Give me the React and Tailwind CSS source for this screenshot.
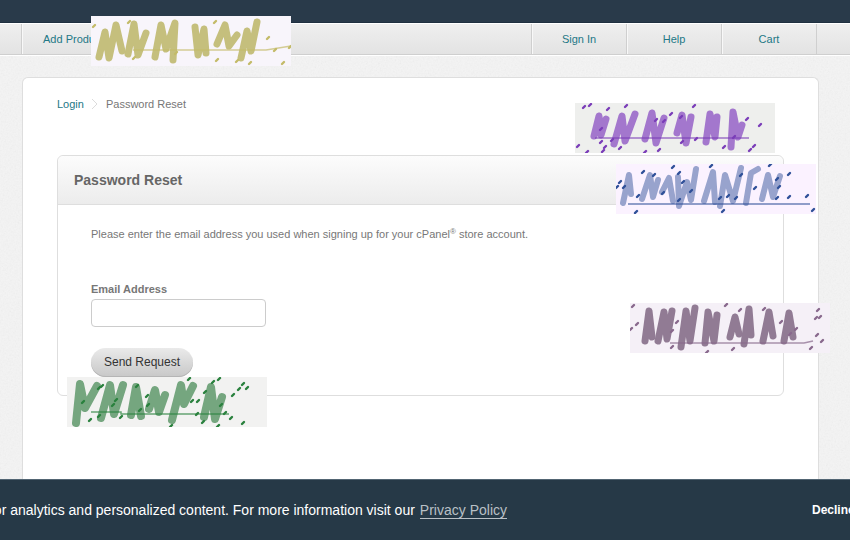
import React from 'react';

/* Noisy picture tile: loose brush marks, a strike line and short specks. */
function NoiseTile({ place, bg, ink, dark, marks, weight, line, specks }) {
  return (
    <svg
      className={`absolute h-[50px] w-[200px] ${place}`}
      viewBox="0 0 200 50"
      role="img"
      aria-label="Distorted picture"
    >
      <rect width="200" height="50" fill={bg} />
      <g fill="none" stroke={ink} strokeWidth={weight} strokeLinecap="round" strokeLinejoin="round">
        {marks.map((d) => (
          <path key={d} d={d} />
        ))}
      </g>
      <path d={line} stroke={dark} strokeWidth="1.5" strokeOpacity="0.7" fill="none" />
      <g stroke={dark} strokeWidth="2.4" strokeLinecap="round">
        {specks.map(([x, y]) => (
          <line key={`${x}-${y}`} x1={x - 1} y1={y + 1} x2={x + 1} y2={y - 1} />
        ))}
      </g>
    </svg>
  );
}

const tiles = [
  {
    place: 'left-[91px] top-[16px]',
    bg: '#f8f5fb', ink: '#c5bf7d', dark: '#c3bb68', weight: 7,
    marks: [
      'M8 41 L14 16 L18 42 L25 9 L31 35',
      'M37 38 L43 8 L47 39 L55 17',
      'M64 41 L70 9 L75 33 L84 7 L82 44',
      'M104 11 L107 39 L113 13 L115 37',
      'M126 28 L134 9 L138 30 L146 19',
      'M150 42 L156 15 L160 35 L166 6',
    ],
    line: 'M42 34 H175 L200 30',
    specks: [[3, 10], [38, 6], [43, 42], [85, 37], [124, 6], [126, 44], [146, 45], [159, 47], [177, 22], [184, 34], [192, 47], [199, 31]],
  },
  {
    place: 'left-[575px] top-[103px]',
    bg: '#eeefed', ink: '#a377cd', dark: '#7a3db8', weight: 7,
    marks: [
      'M19 33 L24 13 L26 32 L31 16',
      'M39 41 L47 13 L50 38 L60 11',
      'M70 36 L77 10 L81 40 L89 15',
      'M102 30 L107 12 L111 40 L116 14',
      'M131 39 L135 11 L140 34 L142 14',
      'M156 44 L158 9 L163 34 L167 22',
    ],
    line: 'M20 35 H174',
    specks: [[9, 4], [15, 2], [33, 6], [51, 3], [119, 3], [172, 16], [185, 22], [3, 43], [12, 49], [26, 39], [30, 44], [28, 48], [45, 45], [70, 49], [84, 47], [107, 39], [121, 36], [149, 44], [175, 47], [179, 43], [26, 26], [37, 37], [81, 17], [89, 18], [96, 11], [106, 14], [159, 34]],
  },
  {
    place: 'left-[616px] top-[164px]',
    bg: '#fbf2ff', ink: '#98a3cd', dark: '#2e4f98', weight: 6,
    marks: [
      'M7 39 L13 11 L15 30',
      'M26 35 L34 11 L37 33 L42 16',
      'M46 28 L53 14 L57 37',
      'M62 13 L63 42 L71 18 L75 36 L80 5',
      'M88 37 L97 8 L99 38',
      'M104 42 L109 11 L117 37 L125 4',
      'M130 39 L135 9 L142 5',
      'M146 35 L152 11 L157 33 L164 12',
    ],
    line: 'M12 40 H194',
    specks: [[27, 8], [38, 11], [57, 3], [95, 2], [154, 1], [63, 9], [4, 18], [1, 23], [8, 23], [22, 32], [67, 18], [47, 29], [75, 27], [63, 36], [125, 11], [139, 24], [161, 15], [163, 23], [173, 10], [161, 34], [173, 33], [191, 32], [197, 46], [20, 48], [107, 47], [112, 32], [120, 34], [104, 34]],
  },
  {
    place: 'left-[630px] top-[303px]',
    bg: '#f5f0f7', ink: '#917b94', dark: '#88688c', weight: 7,
    marks: [
      'M15 38 L19 8 L22 34',
      'M28 38 L34 9 L37 36 L42 8',
      'M51 44 L56 8 L60 38 L65 5',
      'M75 40 L78 9 L84 38 L87 12',
      'M100 34 L105 14 L109 31',
      'M114 41 L119 6 L121 32',
      'M133 38 L139 9 L143 33',
      'M154 38 L159 10 L163 34',
    ],
    line: 'M40 40 H174 L183 38',
    specks: [[3, 3], [7, 21], [1, 26], [42, 28], [47, 19], [42, 44], [96, 2], [110, 7], [134, 6], [151, 19], [160, 31], [166, 26], [188, 7], [186, 15], [190, 14], [187, 32], [192, 38], [181, 45], [103, 46], [77, 49]],
  },
  {
    place: 'left-[67px] top-[377px]',
    bg: '#f2f2f1', ink: '#75a67f', dark: '#29813d', weight: 8,
    marks: [
      'M9 46 L13 7 L18 31 L30 9',
      'M34 41 L43 8 L47 37 L56 8',
      'M64 38 L69 10 L74 39',
      'M82 32 L88 13 L92 35 L98 18',
      'M105 43 L114 8 L117 27 L126 9',
      'M137 40 L144 10 L148 42 L155 20',
    ],
    line: 'M24 35 H54 V37 H162',
    specks: [[16, 25], [32, 11], [35, 9], [23, 43], [32, 39], [54, 40], [49, 23], [70, 9], [80, 19], [81, 28], [73, 33], [122, 2], [125, 24], [131, 24], [138, 15], [146, 5], [152, 2], [154, 28], [130, 37], [136, 45], [158, 36], [166, 18], [164, 41], [172, 12], [176, 7], [180, 11], [176, 46], [151, 49], [104, 49], [46, 28]],
  },
];

function NavLink({ children }) {
  return (
    <a
      href="#"
      className="flex w-[95px] items-center justify-center border-l border-[#cfcfcf] text-[11px] text-[#237886] shadow-[inset_1px_0_0_#f8f8f8]"
    >
      {children}
    </a>
  );
}

export default function App() {
  return (
    <div
      className="relative isolate flex h-screen flex-col overflow-hidden bg-[#f4f4f4] text-[11px] text-[#777]"
      style={{ fontFamily: '"Liberation Sans", Arial, sans-serif' }}
    >
      <svg className="absolute inset-0 -z-10 h-full w-full opacity-10" aria-hidden="true">
        <filter id="grain">
          <feTurbulence type="fractalNoise" baseFrequency="0.6" numOctaves="2" />
          <feColorMatrix type="saturate" values="0" />
        </filter>
        <rect width="100%" height="100%" filter="url(#grain)" />
      </svg>

      <div className="h-[23px] shrink-0 border-b border-[#1f3040] bg-[#293a4a]" />
      <nav className="flex h-8 shrink-0 border-t border-b border-t-white border-b-[#cfcfcf] bg-linear-to-b from-[#efefef] to-[#e3e3e3] pr-[33px] pl-[21px] shadow-[0_1px_0_#fff]">
        <a
          href="#"
          className="flex items-center border-l border-[#cfcfcf] pl-[21px] text-[11px] text-[#237886] shadow-[inset_1px_0_0_#f8f8f8]"
        >
          Add Products
        </a>
        <div className="ml-auto flex border-r border-[#cfcfcf]">
          <NavLink>Sign In</NavLink>
          <NavLink>Help</NavLink>
          <NavLink>Cart</NavLink>
        </div>
      </nav>

      <main className="mt-[22px] mr-[31px] ml-[22px] flex-1 rounded-t-md border border-b-0 border-[#dedede] bg-white px-[34px] pt-5">
        <div className="flex h-3 items-center gap-[7px] leading-3">
          <a href="#" className="text-[#237886]">Login</a>
          <svg className="h-3 w-2" viewBox="0 0 8 12" fill="none" stroke="#dcdcdc" aria-hidden="true">
            <path d="M1 1 L6 6 L1 11" />
          </svg>
          <span>Password Reset</span>
        </div>

        <section className="mt-[45px] h-[241px] rounded-md border border-[#dedede]">
          <h1 className="flex h-[49px] items-center rounded-t-md border-b border-[#dedede] bg-linear-to-b from-[#fcfcfc] to-[#ececec] px-4 text-sm font-bold text-[#666]">
            Password Reset
          </h1>
          <form className="flex flex-col items-start px-[33px] pt-[21px]" onSubmit={(e) => e.preventDefault()}>
            <p className="leading-4">
              Please enter the email address you used when signing up for your cPanel
              <sup className="text-[8px]">®</sup> store account.
            </p>
            <label htmlFor="email" className="mt-[39px] leading-4 font-bold">Email Address</label>
            <input
              id="email"
              type="email"
              className="mt-0.5 h-7 w-[175px] rounded border border-[#ccc] bg-white px-2 outline-none"
            />
            <button
              type="submit"
              className="mt-[21px] h-[29px] rounded-full bg-linear-to-b from-[#eaeaea] to-[#c8c8c8] px-[13px] pb-0.5 text-xs text-[#333] shadow-[inset_0_-1px_0_#b5b5b5]"
            >
              Send Request
            </button>
          </form>
        </section>
      </main>

      <footer className="flex h-[61px] shrink-0 items-center overflow-hidden border-t border-[#526573] bg-[#263947] text-sm whitespace-nowrap text-white">
        <div className="flex w-3/5 shrink-0 items-baseline justify-end gap-[5px] pr-[3px]">
          <span>s for analytics and personalized content. For more information visit our</span>
          <a href="#" className="border-b border-[#b9c0c6] leading-4 text-[#b9c0c6]">Privacy Policy</a>
        </div>
        <button type="button" className="ml-auto w-[38px] overflow-hidden text-left text-xs font-bold">
          Decline
        </button>
      </footer>

      {tiles.map((tile) => (
        <NoiseTile key={tile.place} {...tile} />
      ))}
    </div>
  );
}
